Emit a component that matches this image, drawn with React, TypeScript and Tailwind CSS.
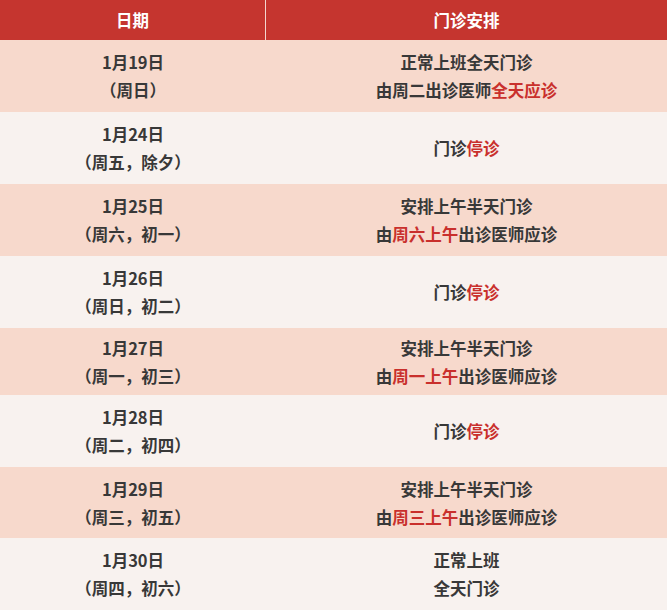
import React from 'react';

type Seg = { t: string; red?: boolean };

const rows: { h: string; date: string; week: string; lines: Seg[][]; pink: boolean }[] = [
  { h: 'h-[72px]', date: '1月19日', week: '（周日）', pink: true, lines: [[{ t: '正常上班全天门诊' }], [{ t: '由周二出诊医师' }, { t: '全天应诊', red: true }]] },
  { h: 'h-[72px]', date: '1月24日', week: '（周五，除夕）', pink: false, lines: [[{ t: '门诊' }, { t: '停诊', red: true }]] },
  { h: 'h-[72px]', date: '1月25日', week: '（周六，初一）', pink: true, lines: [[{ t: '安排上午半天门诊' }], [{ t: '由' }, { t: '周六上午', red: true }, { t: '出诊医师应诊' }]] },
  { h: 'h-[72px]', date: '1月26日', week: '（周日，初二）', pink: false, lines: [[{ t: '门诊' }, { t: '停诊', red: true }]] },
  { h: 'h-[67px]', date: '1月27日', week: '（周一，初三）', pink: true, lines: [[{ t: '安排上午半天门诊' }], [{ t: '由' }, { t: '周一上午', red: true }, { t: '出诊医师应诊' }]] },
  { h: 'h-[72px]', date: '1月28日', week: '（周二，初四）', pink: false, lines: [[{ t: '门诊' }, { t: '停诊', red: true }]] },
  { h: 'h-[71px]', date: '1月29日', week: '（周三，初五）', pink: true, lines: [[{ t: '安排上午半天门诊' }], [{ t: '由' }, { t: '周三上午', red: true }, { t: '出诊医师应诊' }]] },
  { h: 'h-[72px]', date: '1月30日', week: '（周四，初六）', pink: false, lines: [[{ t: '正常上班' }], [{ t: '全天门诊' }]] },
];

export default function App() {
  return (
    <div
      className="w-[667px] h-[613px] bg-white text-[16.5px] font-bold leading-[28px] text-[#383838]"
      style={{ fontFamily: '"Microsoft YaHei", "Noto Sans CJK SC", sans-serif' }}
    >
      <div className="flex h-[40px] bg-[#c5352f] text-white">
        <div className="w-[266px] flex items-center justify-center border-r border-[#f3d6cf]">日期</div>
        <div className="flex-1 flex items-center justify-center">门诊安排</div>
      </div>
      {rows.map((r, i) => (
        <div key={i} className={`flex ${r.h} ${r.pink ? 'bg-[#f7d9cc]' : 'bg-[#f8f2ef]'}`}>
          <div className="w-[266px] flex flex-col items-center justify-center">
            <div>{r.date}</div>
            <div>{r.week}</div>
          </div>
          <div className="flex-1 flex flex-col items-center justify-center">
            {r.lines.map((line, j) => (
              <div key={j}>
                {line.map((s, k) => (
                  <span key={k} className={s.red ? 'text-[#c9302c]' : ''}>
                    {s.t}
                  </span>
                ))}
              </div>
            ))}
          </div>
        </div>
      ))}
    </div>
  );
}
